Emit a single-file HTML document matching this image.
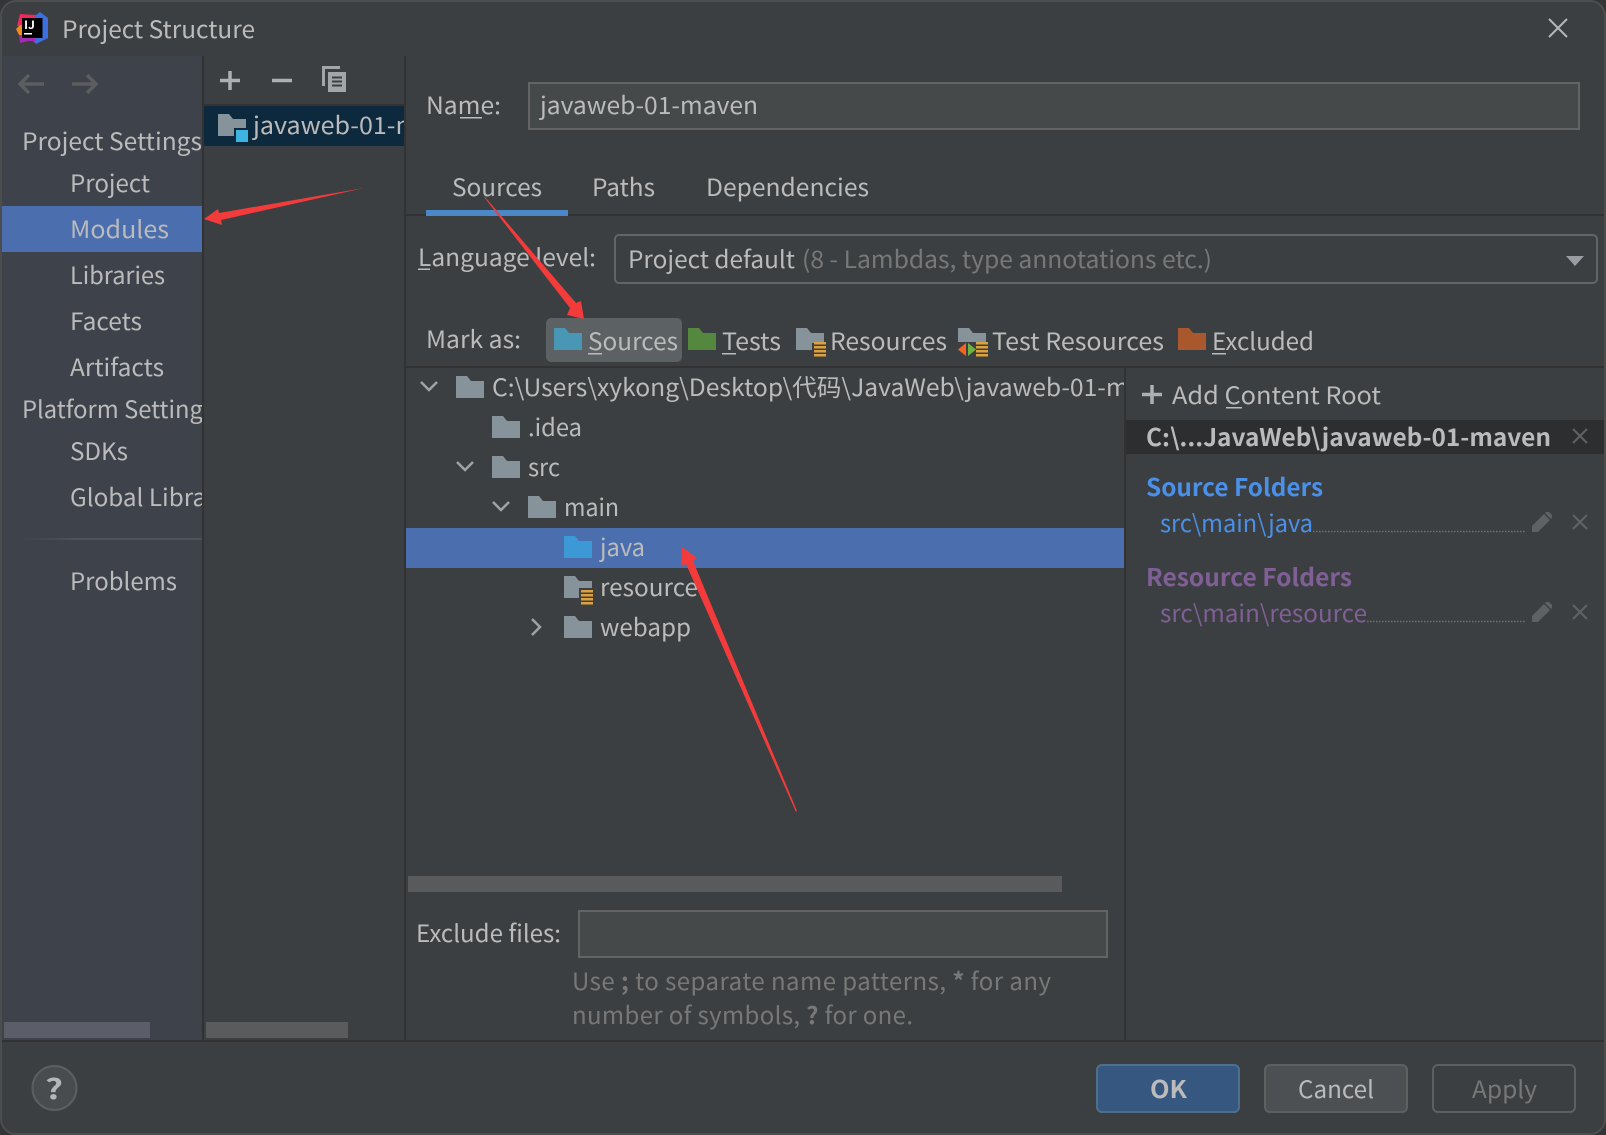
<!DOCTYPE html>
<html lang="en">
<head>
<meta charset="utf-8">
<title>Project Structure</title>
<style>
html,body{margin:0;padding:0;width:1606px;height:1135px;overflow:hidden;background:#333537}
svg{display:block}
text{font-family:"Noto Sans CJK SC","Liberation Sans",sans-serif;font-size:24px;fill:#bbbbbb}
.b{font-weight:700}
.g{fill:#787878}
</style>
</head>
<body>
<svg xmlns="http://www.w3.org/2000/svg" width="1606" height="1135" viewBox="0 0 1606 1135">
<defs>
<clipPath id="c1"><rect x="2" y="56" width="200" height="980"/></clipPath>
<clipPath id="c2"><rect x="204" y="100" width="200" height="60"/></clipPath>
<clipPath id="c3"><rect x="406" y="368" width="718" height="40"/></clipPath>
<path id="f" d="M0 0H11L15 5H28V22H0Z"/>
<g id="st" fill="#dba13f"><rect x="0" y="0" width="12" height="2.5"/><rect x="0" y="4" width="12" height="2.5"/><rect x="0" y="8" width="12" height="2.5"/><rect x="0" y="12" width="12" height="2.5"/></g>
<linearGradient id="sep" x1="0" x2="1"><stop offset="0" stop-color="#3e424a"/><stop offset=".3" stop-color="#4f5256"/><stop offset="1" stop-color="#4f5256"/></linearGradient>
</defs>

<!-- window -->
<rect x="1" y="1" width="1604" height="1133" rx="15" fill="#3c3f41" stroke="#4b4d4f" stroke-width="2"/>

<!-- sidebar -->
<rect x="2" y="56" width="200" height="984" fill="#3e424a"/>
<rect x="202" y="56" width="2" height="984" fill="#323232"/>
<rect x="404" y="56" width="2" height="984" fill="#323232"/>
<rect x="2" y="1040" width="1602" height="2" fill="#323232"/>
<rect x="1124" y="367" width="2" height="673" fill="#323232"/>
<rect x="204" y="104" width="200" height="2" fill="#323232"/>

<!-- logo -->
<polygon points="20,14 36,15 38,24 22,26 17,26" fill="#f0285f"/>
<polygon points="36,15 40,12 48,18 48,38 36,44 30,38 36,24" fill="#3d6fe0"/>
<polygon points="19,34 32,30 36,41 28,41 20,43" fill="#a52cb0"/>
<polygon points="16,29 20,25 24,26 24,35 19,35" fill="#f08a1d"/>
<rect x="22" y="18" width="20.500" height="20" fill="#000"/>
<text x="24" y="29" class="b" style="font-size:11px;fill:#fff" textLength="11" lengthAdjust="spacingAndGlyphs">IJ</text>
<rect x="24" y="33" width="8" height="1.500" fill="#fff"/>

<text x="62" y="38" textLength="193" lengthAdjust="spacingAndGlyphs">Project Structure</text>
<path d="M1549 19L1567 37M1567 19L1549 37" stroke="#b4b6b8" stroke-width="2" fill="none"/>

<!-- nav -->
<path d="M44 84H20M29 75L20 84L29 93" fill="none" stroke="#5b5d5f" stroke-width="3.500"/>
<path d="M72 84H96M87 75L96 84L87 93" fill="none" stroke="#5b5d5f" stroke-width="3.500"/>

<rect x="2" y="206" width="200" height="46" fill="#4b6eaf"/>
<g clip-path="url(#c1)">
<text x="22" y="150" textLength="180" lengthAdjust="spacingAndGlyphs">Project Settings</text>
<text x="70" y="192" textLength="80" lengthAdjust="spacingAndGlyphs">Project</text>
<text x="70" y="238" textLength="99" lengthAdjust="spacingAndGlyphs">Modules</text>
<text x="70" y="284" textLength="95" lengthAdjust="spacingAndGlyphs">Libraries</text>
<text x="70" y="330" textLength="72" lengthAdjust="spacingAndGlyphs">Facets</text>
<text x="70" y="376" textLength="94" lengthAdjust="spacingAndGlyphs">Artifacts</text>
<text x="22" y="418" textLength="192" lengthAdjust="spacingAndGlyphs">Platform Settings</text>
<text x="70" y="460" textLength="58" lengthAdjust="spacingAndGlyphs">SDKs</text>
<text x="70" y="506" textLength="177" lengthAdjust="spacingAndGlyphs">Global Libraries</text>
<text x="70" y="590" textLength="107" lengthAdjust="spacingAndGlyphs">Problems</text>
</g>
<rect x="20" y="538" width="182" height="2" fill="url(#sep)"/>
<rect x="4" y="1022" width="146" height="16" fill="#5b5e68"/>

<!-- module list -->
<path d="M220 80.500H240M230 71V90" stroke="#adb0b2" stroke-width="3.500" fill="none"/>
<path d="M272 80.500H292" stroke="#adb0b2" stroke-width="3.500" fill="none"/>
<path d="M340 67.500H323.500V86" stroke="#a3a6a8" stroke-width="3" fill="none"/>
<rect x="328" y="72" width="18" height="20" fill="#a3a6a8"/>
<path d="M332 77.500H342M332 81.500H342M332 85.500H342" stroke="#3c3f41" stroke-width="2"/>

<rect x="204" y="106" width="200" height="40" fill="#0d293e"/>
<use href="#f" x="218" y="114" fill="#87939a"/>
<rect x="234" y="128" width="16" height="16" fill="#0d293e"/>
<rect x="236" y="130" width="12" height="12" fill="#3eb4e0"/>
<g clip-path="url(#c2)"><text x="253" y="134" textLength="222" lengthAdjust="spacingAndGlyphs">javaweb-01-maven</text></g>
<rect x="206" y="1022" width="142" height="16" fill="#5a5b5d"/>

<!-- name -->
<text x="426" y="114" textLength="75" lengthAdjust="spacingAndGlyphs">Name:</text>
<rect x="460" y="117" width="22" height="1.500" fill="#bbbbbb"/>
<rect x="529" y="83" width="1050" height="46" fill="#45494a" stroke="#646464" stroke-width="2"/>
<text x="540" y="114" textLength="218" lengthAdjust="spacingAndGlyphs">javaweb-01-maven</text>

<!-- tabs -->
<rect x="406" y="214" width="1198" height="2" fill="#323232"/>
<rect x="426" y="210" width="142" height="6" fill="#4a88c7"/>
<text x="452" y="196" textLength="90" lengthAdjust="spacingAndGlyphs">Sources</text>
<text x="592" y="196" textLength="63" lengthAdjust="spacingAndGlyphs">Paths</text>
<text x="706" y="196" textLength="163" lengthAdjust="spacingAndGlyphs">Dependencies</text>

<!-- language level -->
<text x="418" y="266" textLength="178" lengthAdjust="spacingAndGlyphs">Language level:</text>
<rect x="418" y="268.500" width="12" height="1.500" fill="#bbbbbb"/>
<rect x="615" y="235" width="982" height="48" rx="4" fill="#3c3f41" stroke="#646464" stroke-width="2"/>
<text x="628" y="268" textLength="167" lengthAdjust="spacingAndGlyphs">Project default</text>
<text x="802" y="268" class="g" textLength="410" lengthAdjust="spacingAndGlyphs">(8 - Lambdas, type annotations etc.)</text>
<polygon points="1566,256 1584,256 1575,266" fill="#9a9da1"/>

<!-- mark as -->
<text x="426" y="348" textLength="95" lengthAdjust="spacingAndGlyphs">Mark as:</text>
<rect x="546" y="318" width="136" height="44" rx="5" fill="#5c6164"/>
<use href="#f" x="554" y="328" fill="#4897b5"/>
<text x="588" y="350" textLength="90" lengthAdjust="spacingAndGlyphs">Sources</text>
<rect x="588" y="353" width="14" height="1.500" fill="#bbbbbb"/>
<use href="#f" x="688" y="328" fill="#55883f"/>
<text x="722" y="350" textLength="59" lengthAdjust="spacingAndGlyphs">Tests</text>
<rect x="722" y="353" width="14" height="1.500" fill="#bbbbbb"/>
<use href="#f" x="796" y="328" fill="#87939a"/>
<rect x="812" y="343" width="16" height="10" fill="#3c3f41"/>
<use href="#st" x="814" y="342"/>
<text x="830" y="350" textLength="117" lengthAdjust="spacingAndGlyphs">Resources</text>
<use href="#f" x="958" y="328" fill="#87939a"/>
<rect x="956" y="342" width="34" height="10" fill="#3c3f41"/>
<polygon points="966,343 966,356 958,349.500" fill="#f26522"/>
<polygon points="968,343 968,356 976,349.500" fill="#6fb33f"/>
<use href="#st" x="976" y="342"/>
<text x="992" y="350" textLength="172" lengthAdjust="spacingAndGlyphs">Test Resources</text>
<use href="#f" x="1178" y="328" fill="#a9572c"/>
<text x="1212" y="350" textLength="102" lengthAdjust="spacingAndGlyphs">Excluded</text>
<rect x="1212" y="353" width="14" height="1.500" fill="#bbbbbb"/>
<rect x="406" y="366" width="1198" height="2" fill="#323232"/>

<!-- tree -->
<rect x="406" y="528" width="718" height="40" fill="#4b6eaf"/>
<path d="M421 382L429 390L437 382" fill="none" stroke="#a0a3a5" stroke-width="2.500"/>
<use href="#f" x="456" y="376" fill="#87939a"/>
<g clip-path="url(#c3)"><text x="492" y="396" textLength="692" lengthAdjust="spacingAndGlyphs">C:\Users\xykong\Desktop\代码\JavaWeb\javaweb-01-maven</text></g>
<use href="#f" x="492" y="416" fill="#87939a"/>
<text x="528" y="436" textLength="54" lengthAdjust="spacingAndGlyphs">.idea</text>
<path d="M457 462L465 470L473 462" fill="none" stroke="#a0a3a5" stroke-width="2.500"/>
<use href="#f" x="492" y="456" fill="#87939a"/>
<text x="528" y="476" textLength="32" lengthAdjust="spacingAndGlyphs">src</text>
<path d="M493 502L501 510L509 502" fill="none" stroke="#a0a3a5" stroke-width="2.500"/>
<use href="#f" x="528" y="496" fill="#87939a"/>
<text x="564" y="516" textLength="55" lengthAdjust="spacingAndGlyphs">main</text>
<use href="#f" x="564" y="536" fill="#3d99d6"/>
<text x="600" y="556" textLength="45" lengthAdjust="spacingAndGlyphs">java</text>
<use href="#f" x="564" y="576" fill="#87939a"/>
<rect x="579" y="588" width="16" height="12" fill="#3c3f41"/>
<use href="#st" x="581" y="590"/>
<text x="600" y="596" textLength="98" lengthAdjust="spacingAndGlyphs">resource</text>
<path d="M532 619L540 627L532 635" fill="none" stroke="#a0a3a5" stroke-width="2.500"/>
<use href="#f" x="564" y="616" fill="#87939a"/>
<text x="600" y="636" textLength="91" lengthAdjust="spacingAndGlyphs">webapp</text>
<rect x="408" y="876" width="654" height="16" fill="#595a5c"/>

<!-- exclude -->
<text x="416" y="942" textLength="145" lengthAdjust="spacingAndGlyphs">Exclude files:</text>
<rect x="579" y="911" width="528" height="46" fill="#45494a" stroke="#646464" stroke-width="2"/>
<text x="572" y="990" class="g" textLength="479" lengthAdjust="spacing">Use <tspan class="b">;</tspan> to separate name patterns, <tspan class="b">*</tspan> for any</text>
<text x="572" y="1024" class="g" textLength="341" lengthAdjust="spacing">number of symbols, <tspan class="b">?</tspan> for one.</text>

<!-- right panel -->
<path d="M1142 394.500H1162M1152 385V404" stroke="#adb0b2" stroke-width="3.500" fill="none"/>
<text x="1172" y="404" textLength="209" lengthAdjust="spacingAndGlyphs">Add Content Root</text>
<rect x="1226" y="407" width="16" height="1.500" fill="#bbbbbb"/>
<rect x="1126" y="420" width="478" height="34" fill="#2c2e2f"/>
<text x="1146" y="446" class="b" textLength="405" lengthAdjust="spacingAndGlyphs">C:\...JavaWeb\javaweb-01-maven</text>
<path d="M1573 429L1587 443M1587 429L1573 443" stroke="#606365" stroke-width="2"/>
<text x="1146" y="496" class="b" style="fill:#4a90e8" textLength="177" lengthAdjust="spacingAndGlyphs">Source Folders</text>
<text x="1160" y="532" style="fill:#4a90e8" textLength="153" lengthAdjust="spacingAndGlyphs">src\main\java</text>
<path d="M1313 531.500H1525" stroke="#6d7072" stroke-width="1.500" stroke-dasharray="1.500 1.500"/>
<path d="M1532 532V526L1544 514L1550 520L1538 532ZM1546 512H1549L1552 515V518L1551 519L1545 513Z" fill="#5f6264"/>
<path d="M1573 515L1587 529M1587 515L1573 529" stroke="#606365" stroke-width="2"/>
<text x="1146" y="586" class="b" style="fill:#7f5f96" textLength="206" lengthAdjust="spacingAndGlyphs">Resource Folders</text>
<text x="1160" y="622" style="fill:#7f5f96" textLength="207" lengthAdjust="spacingAndGlyphs">src\main\resource</text>
<path d="M1367 621.500H1525" stroke="#6d7072" stroke-width="1.500" stroke-dasharray="1.500 1.500"/>
<path d="M1532 622V616L1544 604L1550 610L1538 622ZM1546 602H1549L1552 605V608L1551 609L1545 603Z" fill="#5f6264"/>
<path d="M1573 605L1587 619M1587 605L1573 619" stroke="#606365" stroke-width="2"/>

<!-- footer -->
<circle cx="54.500" cy="1088" r="22" fill="#484c4e" stroke="#5c5f61" stroke-width="2"/>
<text x="45" y="1099" class="b" style="font-size:28px;fill:#b4b6b8" textLength="18" lengthAdjust="spacingAndGlyphs">?</text>
<rect x="1097" y="1065" width="142" height="47" rx="5" fill="#365880" stroke="#4c708c" stroke-width="2"/>
<text x="1150" y="1098" class="b" textLength="37" lengthAdjust="spacingAndGlyphs">OK</text>
<rect x="1265" y="1065" width="142" height="47" rx="5" fill="#4c5052" stroke="#5e6060" stroke-width="2"/>
<text x="1298" y="1098" textLength="76" lengthAdjust="spacingAndGlyphs">Cancel</text>
<rect x="1433" y="1065" width="142" height="47" rx="5" fill="#3c3f41" stroke="#5e6060" stroke-width="2"/>
<text x="1472" y="1098" style="fill:#777" textLength="65" lengthAdjust="spacingAndGlyphs">Apply</text>

<!-- red arrows -->
<polygon points="364,188 221,220 222,225 204,219 218,209 219,213" fill="#f43b3b"/>
<polygon points="484,197 485,197 576,303 581,301 584,319 567,315 570,308" fill="#f43b3b"/>
<polygon points="797,811 796,812 686,564 681,566 682,547 697,558 693,561" fill="#f43b3b"/>
</svg>
</body>
</html>
